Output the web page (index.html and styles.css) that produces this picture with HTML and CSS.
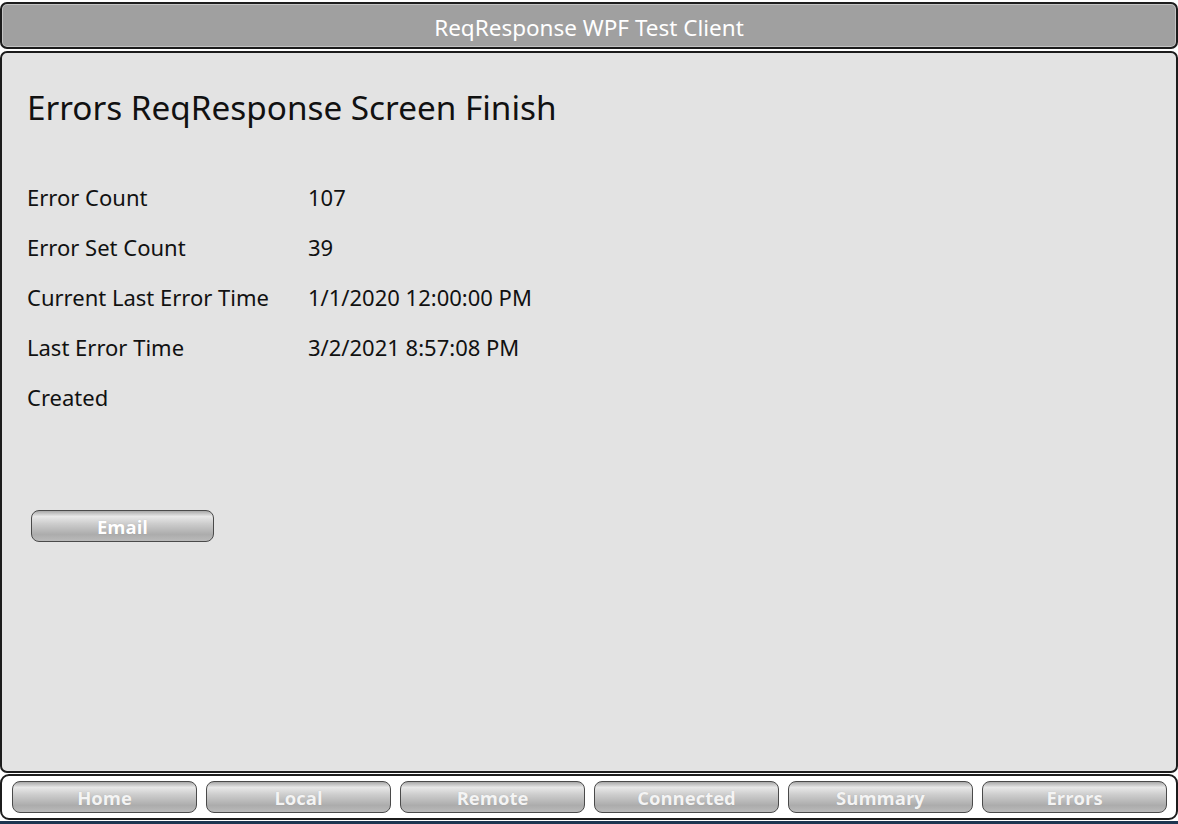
FILE: index.html
```html
<!DOCTYPE html>
<html>
<head>
<meta charset="utf-8">
<link rel="stylesheet" href="styles.css">
</head>
<body>
<div class="window">
  <header class="titlebar">ReqResponse WPF Test Client</header>
  <main class="content">
    <h1 class="heading">Errors ReqResponse Screen Finish</h1>
    <div class="fields">
      <div class="label">Error Count</div><div class="value">107</div>
      <div class="label">Error Set Count</div><div class="value">39</div>
      <div class="label">Current Last Error Time</div><div class="value">1/1/2020 12:00:00 PM</div>
      <div class="label">Last Error Time</div><div class="value">3/2/2021 8:57:08 PM</div>
      <div class="label">Created</div><div class="value"></div>
    </div>
    <button class="btn email">Email</button>
  </main>
  <nav class="navbar">
    <button class="btn nav">Home</button>
    <button class="btn nav">Local</button>
    <button class="btn nav">Remote</button>
    <button class="btn nav">Connected</button>
    <button class="btn nav">Summary</button>
    <button class="btn nav">Errors</button>
  </nav>
  <div class="strip"></div>
</div>
</body>
</html>
```
FILE: styles.css
```css
html, body {
  margin: 0;
  padding: 0;
  background: #ffffff;
}
body {
  width: 1178px;
  height: 824px;
  overflow: hidden;
  font-family: "Noto Sans", "Open Sans", sans-serif;
}
.window {
  display: flex;
  flex-direction: column;
  height: 824px;
  box-sizing: border-box;
  padding-top: 2px;
}
.titlebar {
  height: 47px;
  box-sizing: border-box;
  margin: 0 0 2px 0;
  border: 2px solid #1c1c1c;
  border-radius: 7px;
  background: #a0a0a0;
  box-shadow: inset 0 0 0 1px #c4c4c4;
  color: #ffffff;
  font-size: 22.5px;
  display: flex;
  align-items: center;
  justify-content: center;
  padding-top: 3px;
}
.content {
  flex: 1;
  box-sizing: border-box;
  border: 2px solid #1c1c1c;
  border-radius: 7px;
  background: #e3e3e3;
  padding: 0 25px;
}
.heading {
  margin: 33px 0 0 0;
  font-weight: normal;
  font-size: 33.3px;
  color: #111;
  line-height: 42px;
}
.fields {
  display: grid;
  grid-template-columns: 281px auto;
  grid-auto-rows: 50px;
  margin-top: 44px;
  font-size: 22px;
  color: #111;
  align-items: center;
}
.btn {
  box-sizing: border-box;
  border: 1px solid #4a4a4a;
  border-radius: 8px;
  background: linear-gradient(to bottom, #a8a8a8 0%, #e8e8e8 18%, #cdcdcd 42%, #acacac 78%, #bababa 100%);
  color: #ffffff;
  font-family: "Open Sans", "Noto Sans", sans-serif;
  font-weight: bold;
  font-size: 18.5px;
  padding: 0;
  height: 32px;
  text-shadow: 0 0 1px rgba(0,0,0,0.15);
}
.email {
  width: 183px;
  margin: 88px 0 0 4px;
  display: block;
}
.navbar {
  height: 46px;
  box-sizing: border-box;
  border: 2px solid #1c1c1c;
  border-radius: 9px;
  background: #ffffff;
  display: flex;
  gap: 9px;
  padding: 5px 9px 0 10px;
  margin-top: 1px;
}
.nav {
  flex: 1;
  color: #f4f4f4;
}
.strip {
  height: 3px;
  margin-top: 1px;
  background: #1d3550;
}
```
